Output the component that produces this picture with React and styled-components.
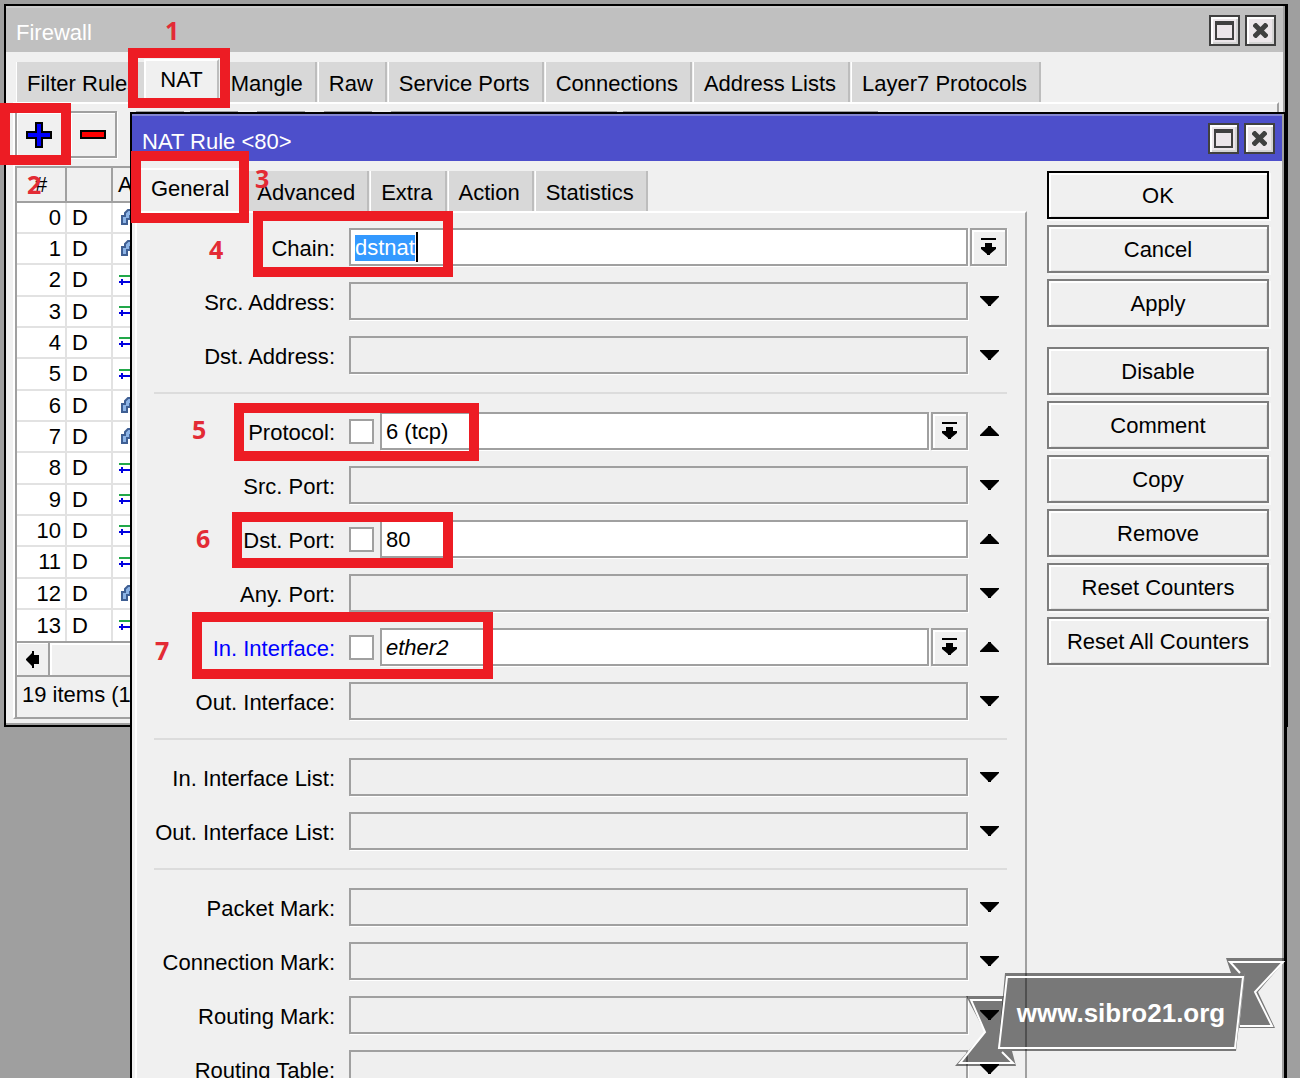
import React, { useEffect, useRef } from "react";
import styled, { createGlobalStyle, css } from "styled-components";

const GlobalStyle = createGlobalStyle`
  *, *::before, *::after {
    box-sizing: border-box;
  }

  body {
    margin: 0;
    overflow: hidden;
    background: #9f9f9f;
    color: #000;
    font-family: "Liberation Sans", Arial, sans-serif;
    font-size: 22px;
    line-height: 26px;
  }

  button, input {
    margin: 0;
    padding: 0;
    border-radius: 0;
    color: inherit;
    font: inherit;
  }
`;

const Desktop = styled.div`
  position: relative;
  height: 100vh;
  overflow: hidden;
  padding: 4px 12px 0 4px;
`;

const FirewallWindow = styled.section`
  border: 2px solid #000;
  border-right-width: 3px;
  background: #f0f0f0;
  box-shadow: inset -2px -2px 0 #a0a0a0;
`;

const RuleWindow = styled.section`
  position: absolute;
  top: 112px;
  left: 130px;
  right: 13px;
  border: 2px solid #000;
  border-right-width: 3px;
  background: #f0f0f0;
  box-shadow: inset -2px 0 0 #a0a0a0;
`;

const TitleBar = styled.header`
  display: flex;
  align-items: center;
  gap: 5px;
  height: ${(p) => (p.$active ? 47 : 46)}px;
  margin-right: 2px;
  padding: 0 7px 0 10px;
  border-top: 2px solid ${(p) => (p.$active ? "#8486d0" : "#cdcdcd")};
  background: ${(p) => (p.$active ? "#4d4fcb" : "#c0c0c0")};
  color: #fff;
`;

const Title = styled.h1`
  flex: 1;
  margin: 0;
  padding-top: 6px;
  font-size: 22px;
  font-weight: normal;
`;

const WindowButton = styled.button`
  display: flex;
  align-items: center;
  justify-content: center;
  width: 31px;
  height: 31px;
  border: 2px solid #404040;
  background: #ece6ea;
  box-shadow: inset 2px 2px 0 #fff, inset -2px -2px 0 #d4d4d4;
`;

const TabRow = styled.div`
  display: flex;
  align-items: flex-end;
  gap: 1px;
  height: 50px;
  padding-left: ${(p) => p.$indent}px;
`;

const Tab = styled.button`
  height: 40px;
  padding: 4px 12px 0 10px;
  border: 0;
  border-left: 1px solid #fff;
  border-right: 2px solid #bdbdbd;
  background: #d8d8d8;
  white-space: nowrap;

  ${(p) =>
    p.$active &&
    css`
      height: 43px;
      padding: 0 14px 4px;
      border-left: 2px solid #fff;
      border-top: 2px solid #fff;
      background: #f0f0f0;

      /* the raised tab overlaps the one before it */
      &:not(:first-child) {
        margin-left: -9px;
      }
    `}
`;

const ListPanel = styled.div`
  margin: 0 6px 6px 7px;
  border: 2px solid #fff;
  border-right-color: #a0a0a0;
  border-bottom-color: #a0a0a0;
`;

const Toolbar = styled.div`
  display: flex;
  gap: 19px;
  padding: 7px 0 8px;
`;

const ToolGroup = styled.div`
  display: flex;
  gap: 6px;
`;

const ToolButton = styled.button`
  display: flex;
  align-items: center;
  justify-content: center;
  width: ${(p) => p.$width || 48}px;
  height: 47px;
  border: 2px solid #a0a0a0;
  background: #f0f0f0;
  box-shadow: inset 1px 1px 0 #fff, 1px 1px 0 #fff;
`;

const RuleTable = styled.table`
  width: 100%;
  border-collapse: separate;
  border-spacing: 0;
  table-layout: fixed;
  border: 2px solid #a0a0a0;
  border-right: 0;
  background: #fff;
  text-align: left;

  th,
  td {
    height: 31px;
    padding: 0 4px 0 5px;
    border-right: 2px solid #e2e2e2;
    border-bottom: 2px solid #e2e2e2;
    line-height: 26px;
    white-space: nowrap;
    overflow: hidden;
  }

  th {
    height: 35px;
    border-color: #a0a0a0;
    background: #f0f0f0;
    font-weight: normal;
  }

  tr:nth-child(3n) td {
    height: 32px;
  }

  tr:last-child td {
    border-bottom: 0;
  }

  th:first-child {
    padding-left: 18px;
  }

  td:first-child {
    text-align: right;
  }

  td svg {
    display: block;
  }
`;

const ScrollTrack = styled.div`
  display: flex;
  height: 34px;
  border-left: 2px solid #a0a0a0;
  border-bottom: 2px solid #a0a0a0;
`;

const ScrollButton = styled.button`
  display: flex;
  align-items: center;
  justify-content: center;
  width: 33px;
  border: 0;
  border-right: 2px solid #a0a0a0;
  background: #f0f0f0;
  box-shadow: inset 1px 1px 0 #fff;
`;

const ScrollThumb = styled.div`
  flex: 1;
  background: #f0f0f0;
  box-shadow: inset 2px 2px 0 #fff;
`;

const StatusBar = styled.footer`
  height: 40px;
  padding: 5px;
  border-left: 2px solid #a0a0a0;
`;

const RuleBody = styled.div`
  display: flex;
  gap: 20px;
  padding: 0 15px 0 3px;
`;

const RuleMain = styled.div`
  flex: 1;
  min-width: 0;
`;

const Form = styled.form`
  display: flex;
  flex-direction: column;
  gap: 16px;
  padding: 15px 18px 40px 12px;
  border-top: 2px solid #fff;
  border-left: 2px solid #fff;
  border-right: 2px solid #a0a0a0;
`;

const FieldRow = styled.div`
  display: flex;
  align-items: center;
  gap: 2px;
  height: 38px;
`;

const FieldLabel = styled.label`
  width: 186px;
  margin-right: 12px;
  padding-top: 3px;
  color: ${(p) => (p.$changed ? "#0000ff" : "#000")};
  text-align: right;
  white-space: nowrap;
`;

const NotBox = styled.input.attrs({ type: "checkbox" })`
  appearance: none;
  width: 25px;
  height: 25px;
  margin-right: 4px;
  border: 2px solid #a0a0a0;
  background: #fff;
`;

const TextBox = styled.input.attrs({ type: "text" })`
  flex: 1;
  min-width: 0;
  height: 38px;
  padding: 2px 4px 0;
  border: 2px solid #a0a0a0;
  outline: 0;
  background: ${(p) => (p.$filled ? "#fff" : "#efefef")};
  box-shadow: 1px 1px 0 #fff;
  font-style: ${(p) => (p.$italic ? "italic" : "normal")};
  line-height: 30px;

  ${(p) =>
    p.$caret &&
    css`
      background: linear-gradient(#000, #000) 65px center / 2px 30px no-repeat #fff;
    `}

  &::selection {
    background: #3399ff;
    color: #fff;
  }
`;

const DropButton = styled.button`
  display: flex;
  align-items: center;
  justify-content: center;
  width: 37px;
  height: 38px;
  border: 2px solid #a0a0a0;
  background: #f0f0f0;
  box-shadow: inset 2px 2px 0 #fff, 1px 1px 0 #fff;
`;

const ToggleButton = styled.button`
  display: flex;
  align-items: center;
  justify-content: center;
  width: 37px;
  height: 38px;
  padding-left: 2px;
  border: 0;
  background: none;
`;

const Divider = styled.hr`
  width: calc(100% - 5px);
  margin: 2px 0 2px 5px;
  border: 0;
  border-top: 2px solid #dcdcdc;
`;

const Actions = styled.aside`
  display: flex;
  flex-direction: column;
  gap: 20px;
  width: 222px;
  padding-top: 10px;
`;

const ActionGroup = styled.div`
  display: flex;
  flex-direction: column;
  gap: 6px;
`;

const ActionButton = styled.button`
  height: 48px;
  padding-top: 2px;
  border: 2px solid ${(p) => (p.$primary ? "#000" : "#7d7d7d")};
  background: #f0f0f0;
  box-shadow: inset 2px 2px 0 #fff, inset -1px -1px 0 #e0e0e0, 2px 2px 0 #fafafa;
`;

const Highlight = styled.div`
  position: absolute;
  top: ${(p) => p.$y}px;
  left: ${(p) => p.$x}px;
  width: ${(p) => p.$w}px;
  height: ${(p) => p.$h}px;
  border: 10px solid #ed1c24;
  pointer-events: none;
`;

const StepNumber = styled.span`
  position: absolute;
  top: ${(p) => p.$y}px;
  left: ${(p) => p.$x}px;
  color: #e32b35;
  font-family: "Open Sans", "Noto Sans", sans-serif;
  font-size: 25px;
  font-weight: bold;
  line-height: 20px;
`;

const Ribbon = styled.svg`
  position: absolute;
  right: 12px;
  bottom: 11px;
  width: 333px;
  height: 110px;

  text {
    font-family: "Liberation Sans Narrow", "Liberation Sans", sans-serif;
    font-size: 26px;
    font-weight: bold;
  }
`;

const MaximizeIcon = () => (
  <svg width="19" height="19" viewBox="0 0 19 19" aria-hidden="true">
    <path d="M1 1h17v17H1z" fill="none" stroke="#404040" strokeWidth="2" />
    <path d="M0 0h19v4H0z" fill="#404040" />
  </svg>
);

const CloseIcon = () => (
  <svg width="15" height="15" viewBox="0 0 15 15" aria-hidden="true">
    <path d="M1 1l13 13M14 1L1 14" stroke="#404040" strokeWidth="5" />
  </svg>
);

const PlusIcon = () => (
  <svg width="26" height="26" viewBox="0 0 26 26" aria-hidden="true">
    <path
      d="M10 1h6v9h9v6h-9v9h-6v-9H1v-6h9z"
      fill="#0000ff"
      stroke="#000"
      strokeWidth="2"
    />
  </svg>
);

const MinusIcon = () => (
  <svg width="26" height="9" viewBox="0 0 26 9" aria-hidden="true">
    <path d="M1 1h24v7H1z" fill="#ff0000" stroke="#000" strokeWidth="2" />
  </svg>
);

const DropIcon = () => (
  <svg width="15" height="18" viewBox="0 0 15 18" aria-hidden="true">
    <path d="M0 0h15v2H0zM4 5h7v4h4v2l-6 5v1H6v-1l-6-5V9h4z" />
  </svg>
);

const ArrowIcon = ({ up }) => (
  <svg width="19" height="10" viewBox="0 0 19 10" aria-hidden="true">
    {up ? <path d="M0 10V9l8-8V0h3v1l8 8v1z" /> : <path d="M0 0v1l8 8v1h3V9l8-8V0z" />}
  </svg>
);

const LeftIcon = () => (
  <svg width="13" height="17" viewBox="0 0 13 17" aria-hidden="true">
    <path d="M0 8l6-6V0h2v4h5v9H8v4H6v-2L0 9z" />
  </svg>
);

const NatIcon = () => (
  <svg width="24" height="17" viewBox="0 0 24 17" aria-hidden="true">
    <path d="M1 4h22" stroke="#22a84a" strokeWidth="2" />
    <path d="M1 10h22M4 7v6" stroke="#0000e0" strokeWidth="2" />
  </svg>
);

const JumpIcon = () => (
  <svg width="24" height="17" viewBox="0 0 24 17" aria-hidden="true">
    <path
      d="M4 15V7h3V4l3-3h6l4 4v4h-5V7h-3v3H9v5z"
      fill="#8db4e6"
      stroke="#3f5f93"
      strokeWidth="2"
    />
  </svg>
);

const WindowTitle = ({ active, children }) => (
  <TitleBar $active={active}>
    <Title>{children}</Title>
    <WindowButton aria-label="Maximize">
      <MaximizeIcon />
    </WindowButton>
    <WindowButton aria-label="Close">
      <CloseIcon />
    </WindowButton>
  </TitleBar>
);

const Tabs = ({ names, active, indent }) => (
  <TabRow role="tablist" $indent={indent}>
    {names.map((name) => (
      <Tab key={name} role="tab" aria-selected={name === active} $active={name === active}>
        {name}
      </Tab>
    ))}
  </TabRow>
);

const Field = ({ field }) => {
  const { label, value, not, drop, toggle = true, selected, italic, changed } = field;
  const ref = useRef(null);
  const id = label.toLowerCase().replace(/[^a-z]+/g, "-");
  const filled = value !== undefined;

  useEffect(() => {
    if (selected) {
      ref.current.focus();
      ref.current.select();
    }
  }, [selected]);

  return (
    <FieldRow>
      <FieldLabel htmlFor={id} $changed={changed}>
        {label}:
      </FieldLabel>
      {not && <NotBox aria-label={`Not ${label}`} />}
      <TextBox
        id={id}
        ref={ref}
        defaultValue={value}
        $filled={filled}
        $italic={italic}
        $caret={selected}
      />
      {drop && (
        <DropButton type="button" aria-label={`${label} list`}>
          <DropIcon />
        </DropButton>
      )}
      {toggle && (
        <ToggleButton type="button" aria-label={`Toggle ${label}`}>
          <ArrowIcon up={filled} />
        </ToggleButton>
      )}
    </FieldRow>
  );
};

const fieldGroups = [
  [
    { label: "Chain", value: "dstnat", drop: true, toggle: false, selected: true },
    { label: "Src. Address" },
    { label: "Dst. Address" },
  ],
  [
    { label: "Protocol", value: "6 (tcp)", not: true, drop: true },
    { label: "Src. Port" },
    { label: "Dst. Port", value: "80", not: true },
    { label: "Any. Port" },
    { label: "In. Interface", value: "ether2", not: true, drop: true, italic: true, changed: true },
    { label: "Out. Interface" },
  ],
  [{ label: "In. Interface List" }, { label: "Out. Interface List" }],
  [
    { label: "Packet Mark" },
    { label: "Connection Mark" },
    { label: "Routing Mark" },
    { label: "Routing Table" },
  ],
];

const actionGroups = [
  ["OK", "Cancel", "Apply"],
  ["Disable", "Comment", "Copy", "Remove", "Reset Counters", "Reset All Counters"],
];

const jumpRules = [0, 1, 6, 7, 12];
const rules = Array.from({ length: 14 }, (_, i) => ({ id: i, jump: jumpRules.includes(i) }));

const steps = [
  { n: 1, x: 165, y: 20, box: [128, 48, 102, 60] },
  { n: 2, x: 27, y: 174, box: [0, 103, 71, 62] },
  { n: 3, x: 255, y: 168, box: [131, 151, 118, 72] },
  { n: 4, x: 209, y: 239, box: [253, 211, 200, 66] },
  { n: 5, x: 192, y: 419, box: [234, 403, 245, 58] },
  { n: 6, x: 196, y: 528, box: [232, 512, 221, 56] },
  { n: 7, x: 155, y: 640, box: [192, 612, 301, 67] },
];

const App = () => (
  <>
    <GlobalStyle />
    <Desktop>
      <FirewallWindow>
        <WindowTitle>Firewall</WindowTitle>
        <Tabs
          indent={10}
          active="NAT"
          names={[
            "Filter Rules",
            "NAT",
            "Mangle",
            "Raw",
            "Service Ports",
            "Connections",
            "Address Lists",
            "Layer7 Protocols",
          ]}
        />
        <ListPanel>
          <Toolbar>
            <ToolGroup>
              <ToolButton aria-label="Add">
                <PlusIcon />
              </ToolButton>
              <ToolButton aria-label="Remove rule">
                <MinusIcon />
              </ToolButton>
            </ToolGroup>
            <ToolGroup>
              <ToolButton aria-label="Enable" />
              <ToolButton aria-label="Disable rule" />
            </ToolGroup>
            <ToolButton aria-label="Comment rule" />
            <ToolButton aria-label="Filter" />
            <ToolGroup>
              <ToolButton $width={226} aria-label="Reset rule counters" />
              <ToolButton $width={255} aria-label="Reset all rule counters" />
            </ToolGroup>
          </Toolbar>
          <RuleTable>
            <colgroup>
              <col style={{ width: 50 }} />
              <col style={{ width: 46 }} />
              <col />
            </colgroup>
            <thead>
              <tr>
                <th>#</th>
                <th aria-label="Flags" />
                <th>A</th>
              </tr>
            </thead>
            <tbody>
              {rules.map((rule) => (
                <tr key={rule.id}>
                  <td>{rule.id}</td>
                  <td>D</td>
                  <td>{rule.jump ? <JumpIcon /> : <NatIcon />}</td>
                </tr>
              ))}
            </tbody>
          </RuleTable>
          <ScrollTrack>
            <ScrollButton aria-label="Scroll left">
              <LeftIcon />
            </ScrollButton>
            <ScrollThumb />
          </ScrollTrack>
          <StatusBar>19 items (1</StatusBar>
        </ListPanel>
      </FirewallWindow>

      <RuleWindow>
        <WindowTitle active>NAT Rule &lt;80&gt;</WindowTitle>
        <RuleBody>
          <RuleMain>
            <Tabs
              indent={0}
              active="General"
              names={["General", "Advanced", "Extra", "Action", "Statistics"]}
            />
            <Form>
              {fieldGroups.map((group, i) => (
                <React.Fragment key={i}>
                  {i > 0 && <Divider />}
                  {group.map((field) => (
                    <Field key={field.label} field={field} />
                  ))}
                </React.Fragment>
              ))}
            </Form>
          </RuleMain>
          <Actions>
            {actionGroups.map((group) => (
              <ActionGroup key={group[0]}>
                {group.map((name) => (
                  <ActionButton key={name} $primary={name === "OK"}>
                    {name}
                  </ActionButton>
                ))}
              </ActionGroup>
            ))}
          </Actions>
        </RuleBody>
      </RuleWindow>

      {steps.map(({ n, x, y, box }) => (
        <React.Fragment key={n}>
          <Highlight $x={box[0]} $y={box[1]} $w={box[2]} $h={box[3]} />
          <StepNumber $x={x} $y={y}>
            {n}
          </StepNumber>
        </React.Fragment>
      ))}

      <Ribbon viewBox="955 957 333 110">
        <g fill="#000" fillOpacity="0.5">
          <path d="M966 996h38l-6 55h14l4 15h-61l30-34z" />
          <path d="M1226 958h61l-29 34 17 36h-36l6-55h-14z" />
          <path d="M1005 973h240l-9 78h-238z" />
        </g>
        <g fill="none" stroke="#fff" strokeWidth="2">
          <path d="M1002 1000h-31l14 32-25 31h53l-11-11" />
          <path d="M1240 973l-10-11h53l-28 30 17 34h-32" />
          <path d="M1007 977h236l-8 71h-236z" />
        </g>
        <text x="1121" y="1022" textAnchor="middle" fill="#fff">
          www.sibro21.org
        </text>
      </Ribbon>
    </Desktop>
  </>
);

export default App;
